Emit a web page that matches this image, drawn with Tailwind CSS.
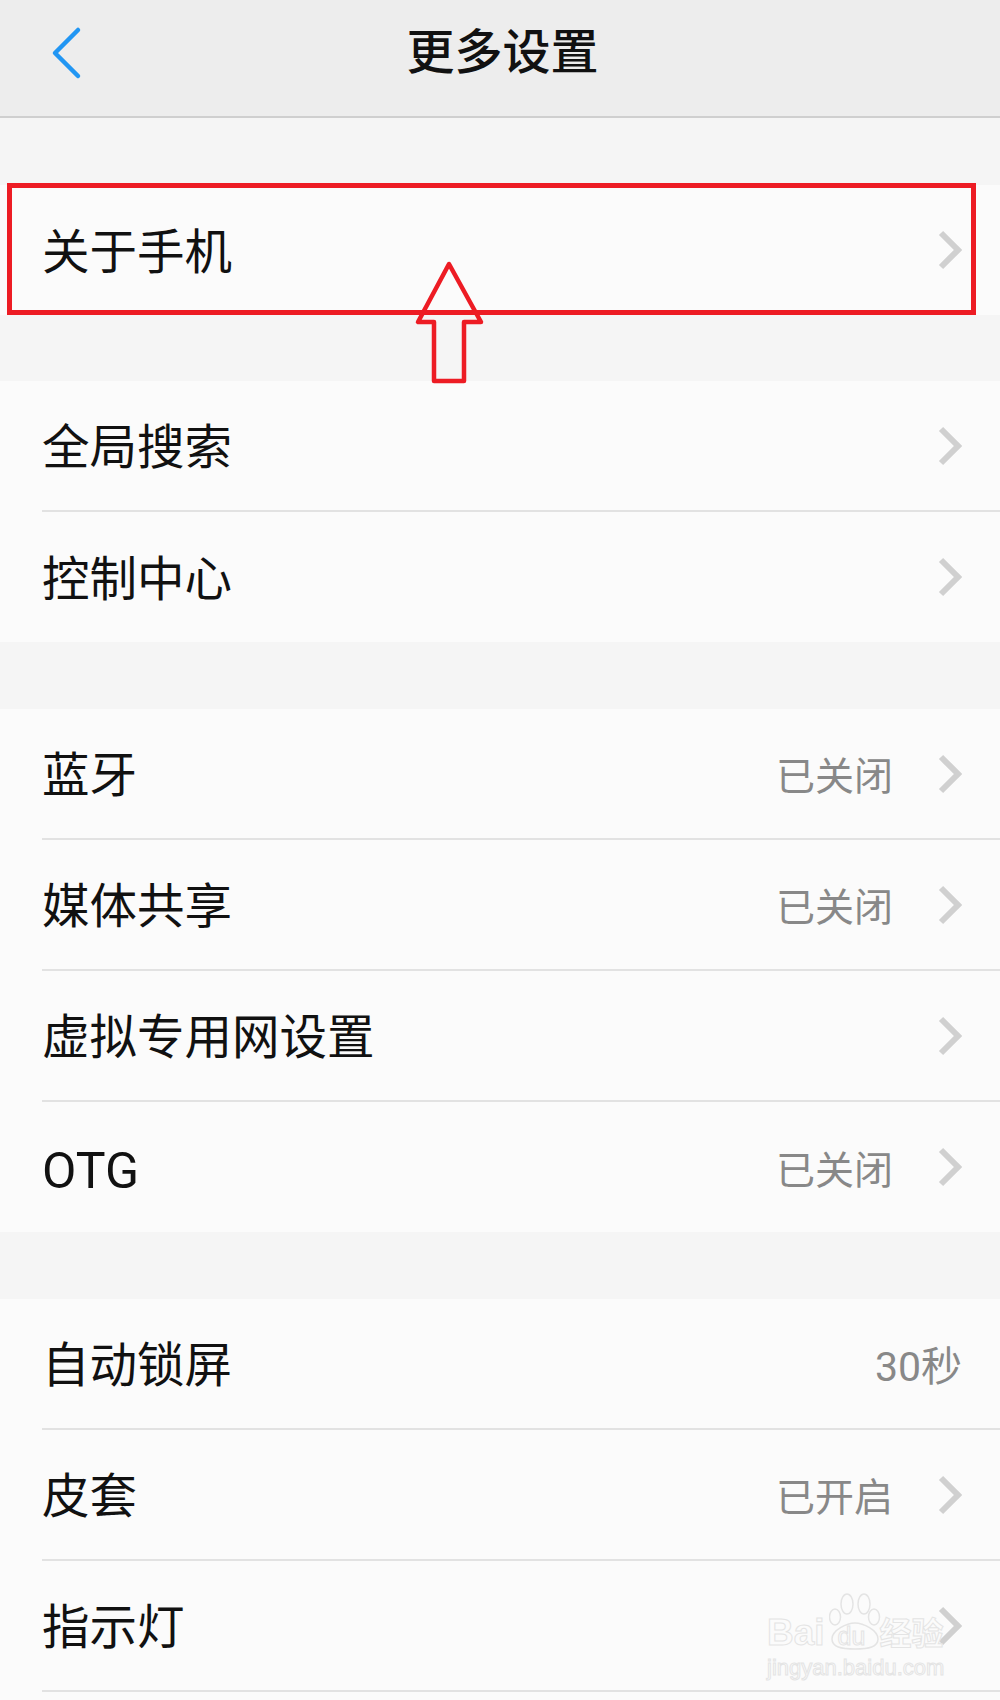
<!DOCTYPE html>
<html lang="zh-CN">

<head>
    <meta charset="UTF-8">
    <meta name="viewport" content="width=device-width, initial-scale=1.0">
    <title>更多设置</title>
    <script src="https://cdn.jsdelivr.net/npm/@tailwindcss/browser@4"></script>
</head>

<body class="bg-[#f5f5f5] font-['Roboto','Noto_Sans_CJK_SC',sans-serif] text-[#111]">
    <div class="relative h-[1700px] w-[1000px] overflow-hidden">
        <!-- Header -->
        <header class="relative flex h-[118px] items-center justify-center border-b-2 border-[#cfcfcf] bg-[#ededed]">
            <svg class="absolute left-[50px] top-[25px]" width="34" height="56" viewBox="0 0 34 56" fill="none" stroke="#2196f3" stroke-width="4.5" stroke-linecap="round" stroke-linejoin="round">
                <path d="M28 5 L5 28 L28 51" />
            </svg>
            <h1 class="ml-[5px] mb-[10px] text-[48px] leading-none font-medium">更多设置</h1>
        </header>

        <!-- Group 1 -->
        <section class="relative mt-[67px] bg-[#fbfbfb]">
            <div class="flex h-[130px] items-center pl-[42px] pr-[38px]">
                <span class="mt-[7px] flex-1 text-[47.5px] leading-none">关于手机</span>
                <svg width="24" height="40" viewBox="0 0 24 40" fill="none" stroke="#d0d0d0" stroke-width="6">
                    <path d="M3 3 L20 20 L3 37" />
                </svg>
            </div>
        </section>

        <!-- Group 2 -->
        <section class="mt-[66px] bg-[#fbfbfb]">
            <div class="ml-[42px] flex h-[131px] items-center border-b-2 border-[#e2e2e2] pr-[38px]">
                <span class="mt-[7px] flex-1 text-[47.5px] leading-none">全局搜索</span>
                <svg width="24" height="40" viewBox="0 0 24 40" fill="none" stroke="#d0d0d0" stroke-width="6"><path d="M3 3 L20 20 L3 37" /></svg>
            </div>
            <div class="ml-[42px] flex h-[130px] items-center pr-[38px]">
                <span class="mt-[7px] flex-1 text-[47.5px] leading-none">控制中心</span>
                <svg width="24" height="40" viewBox="0 0 24 40" fill="none" stroke="#d0d0d0" stroke-width="6"><path d="M3 3 L20 20 L3 37" /></svg>
            </div>
        </section>

        <!-- Group 3 -->
        <section class="mt-[67px] bg-[#fbfbfb]">
            <div class="ml-[42px] flex h-[131px] items-center border-b-2 border-[#e2e2e2] pr-[38px]">
                <span class="mt-[7px] flex-1 text-[47.5px] leading-none">蓝牙</span>
                <span class="mt-[8px] mr-[45px] text-[39px] leading-none text-[#888]">已关闭</span>
                <svg width="24" height="40" viewBox="0 0 24 40" fill="none" stroke="#d0d0d0" stroke-width="6"><path d="M3 3 L20 20 L3 37" /></svg>
            </div>
            <div class="ml-[42px] flex h-[131px] items-center border-b-2 border-[#e2e2e2] pr-[38px]">
                <span class="mt-[7px] flex-1 text-[47.5px] leading-none">媒体共享</span>
                <span class="mt-[8px] mr-[45px] text-[39px] leading-none text-[#888]">已关闭</span>
                <svg width="24" height="40" viewBox="0 0 24 40" fill="none" stroke="#d0d0d0" stroke-width="6"><path d="M3 3 L20 20 L3 37" /></svg>
            </div>
            <div class="ml-[42px] flex h-[131px] items-center border-b-2 border-[#e2e2e2] pr-[38px]">
                <span class="mt-[7px] flex-1 text-[47.5px] leading-none">虚拟专用网设置</span>
                <svg width="24" height="40" viewBox="0 0 24 40" fill="none" stroke="#d0d0d0" stroke-width="6"><path d="M3 3 L20 20 L3 37" /></svg>
            </div>
            <div class="ml-[42px] flex h-[130px] items-center pr-[38px]">
                <span class="mt-[7px] flex-1 text-[50px] leading-none">OTG</span>
                <span class="mt-[8px] mr-[45px] text-[39px] leading-none text-[#888]">已关闭</span>
                <svg width="24" height="40" viewBox="0 0 24 40" fill="none" stroke="#d0d0d0" stroke-width="6"><path d="M3 3 L20 20 L3 37" /></svg>
            </div>
        </section>

        <!-- Group 4 -->
        <section class="mt-[67px] bg-[#fbfbfb]">
            <div class="ml-[42px] flex h-[131px] items-center border-b-2 border-[#e2e2e2] pr-[38px]">
                <span class="mt-[7px] flex-1 text-[47.5px] leading-none">自动锁屏</span>
                <span class="mt-[8px] text-[41px] leading-none text-[#888]">30秒</span>
            </div>
            <div class="ml-[42px] flex h-[131px] items-center border-b-2 border-[#e2e2e2] pr-[38px]">
                <span class="mt-[7px] flex-1 text-[47.5px] leading-none">皮套</span>
                <span class="mt-[8px] mr-[45px] text-[39px] leading-none text-[#888]">已开启</span>
                <svg width="24" height="40" viewBox="0 0 24 40" fill="none" stroke="#d0d0d0" stroke-width="6"><path d="M3 3 L20 20 L3 37" /></svg>
            </div>
            <div class="ml-[42px] flex h-[131px] items-center border-b-2 border-[#e2e2e2] pr-[38px]">
                <span class="mt-[7px] flex-1 text-[47.5px] leading-none">指示灯</span>
                <svg width="24" height="40" viewBox="0 0 24 40" fill="none" stroke="#d0d0d0" stroke-width="6"><path d="M3 3 L20 20 L3 37" /></svg>
            </div>
            <div class="h-[131px]"></div>
        </section>

        <!-- Red annotation -->
        <div class="absolute left-[7px] top-[183px] h-[132px] w-[969px] border-[5px] border-[#ed1c24]"></div>
        <svg class="absolute left-[410px] top-[255px]" width="80" height="135" viewBox="0 0 80 135" fill="none" stroke="#ed1c24" stroke-width="4.5" stroke-linejoin="round">
            <path d="M39 9 L8 67 L24 67 L24 126 L54 126 L54 67 L71 67 Z" />
        </svg>

        <!-- Watermark -->
        <div class="absolute left-[767px] top-[1590px] w-[190px] font-['Liberation_Sans',sans-serif] text-[#fbfbfb] [-webkit-text-stroke:1px_#e4e4e4]">
            <svg class="absolute left-[62px] top-[2px]" width="56" height="60" viewBox="0 0 56 60" fill="#fbfbfb" stroke="#e4e4e4" stroke-width="1.5">
                <ellipse cx="6" cy="25" rx="5.5" ry="8" />
                <ellipse cx="18" cy="12" rx="6" ry="10" />
                <ellipse cx="35" cy="12" rx="6" ry="10" />
                <ellipse cx="45" cy="25" rx="5.5" ry="8" />
                <path d="M26 31 C18 31 3 38 3 47 C3 55 12 57 26 57 C40 57 49 55 49 47 C49 38 34 31 26 31 Z" />
            </svg>
            <div class="relative flex items-baseline pt-[24px] leading-none">
                <span class="text-[37px] font-bold">Bai</span>
                <span class="ml-[13px] text-[25px]">du</span>
                <span class="ml-[14px] font-['Noto_Sans_CJK_SC',sans-serif] text-[32px] font-bold">经验</span>
            </div>
            <div class="relative mt-[6px] text-[22px] leading-none">jingyan.baidu.com</div>
        </div>
    </div>
</body>

</html>
